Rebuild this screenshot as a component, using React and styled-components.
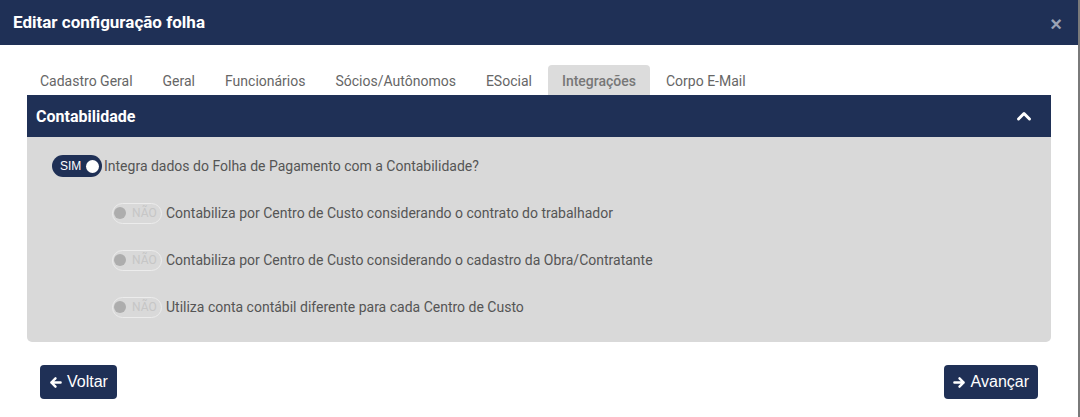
import React, { useState } from 'react'
import styled, { createGlobalStyle } from 'styled-components'

const GlobalStyle = createGlobalStyle`
    html, body { margin: 0; padding: 0; background: #fff; }
    body { font-family: Roboto, 'Liberation Sans', sans-serif; }
    * { box-sizing: border-box; }
`

const NAVY = '#1f3056'

const tabs = ['Cadastro Geral', 'Geral', 'Funcionários', 'Sócios/Autônomos', 'ESocial', 'Integrações', 'Corpo E-Mail']

const options = [
    'Contabiliza por Centro de Custo considerando o contrato do trabalhador',
    'Contabiliza por Centro de Custo considerando o cadastro da Obra/Contratante',
    'Utiliza conta contábil diferente para cada Centro de Custo',
]

export default function App (){
    const [active, setActive] = useState('Integrações')
    const [integra, setIntegra] = useState(true)

    return (
        <>
            <GlobalStyle/>
            <Modal>
                <Header>
                    <h1>Editar configuração folha</h1>
                    <Close>×</Close>
                </Header>
                <Content>
                    <TabList>
                        {tabs.map((t)=>(
                            <Tab key={t} active={t === active} onClick={()=>setActive(t)}>{t}</Tab>
                        ))}
                    </TabList>
                    <Section>
                        <SectionHeader>
                            <span>Contabilidade</span>
                            <svg width="16" height="16" viewBox="0 0 16 16">
                                <path d="M2.5 11 L8 5.5 L13.5 11" fill="none" stroke="#fff" strokeWidth="3" strokeLinecap="round" strokeLinejoin="round"/>
                            </svg>
                        </SectionHeader>
                        <SectionBody>
                            <Row>
                                <Switch on={integra} onClick={()=>setIntegra(!integra)}>
                                    <span>SIM</span>
                                    <Knob on={integra}/>
                                </Switch>
                                <Label>Integra dados do Folha de Pagamento com a Contabilidade?</Label>
                            </Row>
                            {options.map((o)=>(
                                <Row key={o} sub>
                                    <SubSwitch>
                                        <SubKnob/>
                                        <span>NÃO</span>
                                    </SubSwitch>
                                    <Label>{o}</Label>
                                </Row>
                            ))}
                        </SectionBody>
                    </Section>
                    <Footer>
                        <Button>
                            <svg width="13" height="13" viewBox="0 0 14 14">
                                <path d="M12.5 7 H2.5 M7 2.5 L2.5 7 L7 11.5" fill="none" stroke="#fff" strokeWidth="2.6" strokeLinejoin="round" strokeLinecap="round"/>
                            </svg>
                            Voltar
                        </Button>
                        <Button>
                            <svg width="13" height="13" viewBox="0 0 14 14">
                                <path d="M1.5 7 H11.5 M7 2.5 L11.5 7 L7 11.5" fill="none" stroke="#fff" strokeWidth="2.6" strokeLinejoin="round" strokeLinecap="round"/>
                            </svg>
                            Avançar
                        </Button>
                    </Footer>
                </Content>
            </Modal>
        </>
    )
}

const Modal = styled.div`
    width: 1080px;
    height: 417px;
    border-right: 2px solid #7a7a7a;
    background: #fff;
    overflow: hidden;
`

const Header = styled.div`
    height: 45px;
    background: ${NAVY};
    display: flex;
    align-items: center;
    justify-content: space-between;
    padding: 0 16px 0 13px;
    h1{
        margin: 0;
        margin-top: -2px;
        font-size: 17px;
        font-weight: 700;
        color: #fff;
        font-family: Roboto, sans-serif;
    }
`

const Close = styled.span`
    color: #9aa2b4;
    font-family: 'Liberation Sans', Arial, sans-serif;
    font-weight: 700;
    font-size: 20px;
    line-height: 1;
    margin-top: 2px;
`

const Content = styled.div`
    padding: 20px 27px 0 27px;
`

const TabList = styled.div`
    display: flex;
    margin-left: -1px;
`

const Tab = styled.div`
    height: 30px;
    padding: 0 14px;
    display: flex;
    align-items: center;
    padding-top: 2px;
    font-size: 14px;
    cursor: pointer;
    border-radius: 4px 4px 0 0;
    background: ${p => p.active ? '#dcdcdc' : 'transparent'};
    font-weight: ${p => p.active ? 500 : 400};
    color: ${p => p.active ? '#777' : '#666'};
    & + & { margin-left: 2px; }
`

const Section = styled.div`
    border-radius: 0 0 5px 5px;
    overflow: hidden;
`

const SectionHeader = styled.div`
    height: 42px;
    background: ${NAVY};
    display: flex;
    align-items: center;
    justify-content: space-between;
    padding: 0 19px 0 9px;
    span{
        color: #fff;
        font-weight: 700;
        font-size: 16px;
    }
    svg{ margin-top: -1px; }
`

const SectionBody = styled.div`
    background: #d9d9d9;
    height: 205px;
    padding: 18px 0 0 25px;
    display: flex;
    flex-direction: column;
    gap: 25px;
`

const Row = styled.div`
    display: flex;
    align-items: center;
    gap: ${p => p.sub ? '4px' : '2px'};
    height: 22px;
    padding-left: ${p => p.sub ? '60px' : '0'};
`

const Label = styled.span`
    font-size: 14px;
    color: #555;
`

const Switch = styled.div`
    width: 50px;
    height: 22px;
    border-radius: 11px;
    background: ${NAVY};
    display: flex;
    align-items: center;
    justify-content: space-between;
    padding: 0 3px 0 8px;
    cursor: pointer;
    span{
        color: #fff;
        font-family: 'Liberation Sans', Arial, sans-serif;
        font-size: 12px;
    }
`

const Knob = styled.i`
    width: 13px;
    height: 13px;
    border-radius: 50%;
    background: #fff;
    display: block;
`

const SubSwitch = styled.div`
    width: 50px;
    height: 21px;
    border-radius: 11px;
    border: 1px solid #ececec;
    display: flex;
    align-items: center;
    gap: 6px;
    padding-left: 1px;
    span{
        color: #c6c6c6;
        font-size: 12px;
        font-family: Roboto, sans-serif;
    }
`

const SubKnob = styled.i`
    width: 12px;
    height: 12px;
    border-radius: 50%;
    background: #adadad;
    display: block;
`

const Footer = styled.div`
    display: flex;
    justify-content: space-between;
    padding: 23px 13px 0 13px;
`

const Button = styled.button`
    height: 34px;
    padding: 0 9px;
    background: ${NAVY};
    border: none;
    border-radius: 4px;
    color: #fff;
    font-family: 'Liberation Sans', Arial, sans-serif;
    font-size: 16px;
    display: flex;
    align-items: center;
    gap: 5px;
    cursor: pointer;
`
